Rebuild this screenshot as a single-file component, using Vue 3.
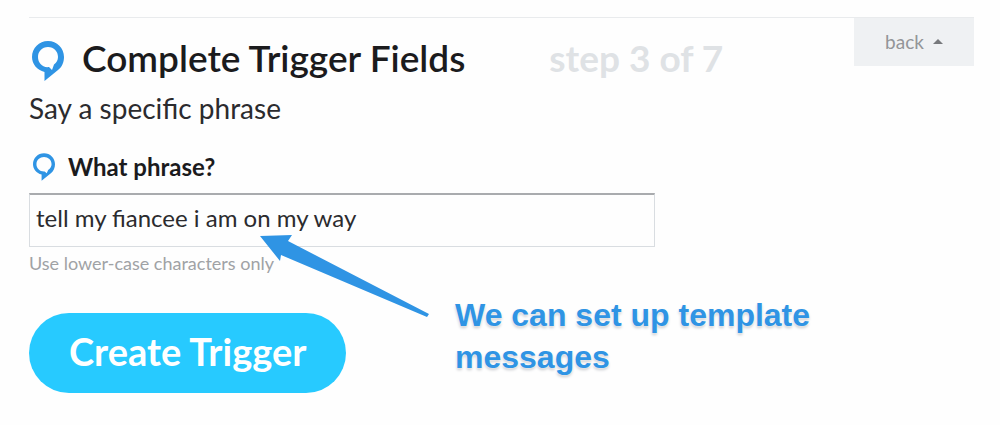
<script setup>
import { ref } from 'vue'

const phrase = ref('tell my fiancee i am on my way')
</script>

<template>
  <main class="page">
    <header class="top">
      <div class="heading">
        <svg class="logo" viewBox="0 0 32 40" aria-hidden="true">
          <path fill-rule="evenodd" d="M16 0C7 0 0 7 0 16C0 23 5 29 12.500 31V40L26 29C30 26 32 21 32 16C32 7 25 0 16 0ZM16 6C22 6 26 10.500 26 16C26 19 24.500 21.500 22 23.500L20 29L17 26C10.500 27 6 22 6 16C6 10.500 10 6 16 6Z" />
        </svg>
        <h1>Complete Trigger Fields</h1>
        <span class="step">step 3 of 7</span>
      </div>
      <button class="back" type="button">
        back
        <svg viewBox="0 0 10 5" aria-hidden="true"><path d="M0 5L5 0L10 5Z" /></svg>
      </button>
    </header>

    <p class="subtitle">Say a specific phrase</p>

    <form class="form" @submit.prevent>
      <label class="label" for="phrase">
        <svg class="logo small" viewBox="0 0 32 40" aria-hidden="true">
          <path fill-rule="evenodd" d="M16 0C7 0 0 7 0 16C0 23 5 29 12.500 31V40L26 29C30 26 32 21 32 16C32 7 25 0 16 0ZM16 5.500C22 5.500 27 10 27 16C27 19 25.500 22 22 24.500L20 29L17 26.500C10 27 5 22 5 16C5 10 10 5.500 16 5.500Z" />
        </svg>
        What phrase?
      </label>
      <input id="phrase" v-model="phrase" type="text" aria-describedby="hint" />
      <p id="hint" class="hint">Use lower-case characters only</p>
      <button class="create" type="submit">Create Trigger</button>
    </form>

    <svg class="arrow" viewBox="0 0 170 82" aria-hidden="true">
      <path d="M0 1L32 0L28 6L169 79L167 82L21 20L20 26Z" />
    </svg>
    <p class="note">We can set up template messages</p>
  </main>
</template>

<style>
body {
  background: #fefefe;
}
</style>

<style scoped>
.page {
  position: relative;
  box-sizing: border-box;
  padding: 17px 26px 32px 29px;
  font-family: Lato, "Liberation Sans", sans-serif;
  color: #1b1b1d;
}

h1,
p {
  margin: 0;
}

.top {
  display: flex;
  justify-content: space-between;
  align-items: flex-start;
  border-top: 1px solid #e9ebed;
}

.heading {
  display: flex;
  align-items: flex-start;
  padding-top: 18px;
}

.logo {
  width: 32px;
  height: 40px;
  margin: 5px 18px 0 3px;
  fill: #2f94e4;
}

.logo.small {
  width: 22px;
  height: 28px;
  margin: 0 13px 0 4px;
}

h1 {
  font-size: 37px;
  line-height: 44px;
  font-weight: 600;
}

.step {
  margin-left: 84px;
  font-size: 37px;
  line-height: 44px;
  font-weight: 700;
  color: #dfe2e5;
}

.back {
  display: flex;
  align-items: center;
  justify-content: center;
  gap: 9px;
  width: 120px;
  height: 48px;
  border: 0;
  padding: 0 0 2px;
  background: #eff1f3;
  font: 19px Lato, sans-serif;
  color: #939598;
}

.back svg {
  width: 10px;
  height: 5px;
  fill: #77797c;
}

.subtitle {
  margin-top: 9px;
  font-size: 28px;
  line-height: 36px;
  font-weight: 400;
  color: #2b2b2e;
}

.form {
  display: flex;
  flex-direction: column;
  align-items: flex-start;
}

.label {
  display: flex;
  align-items: center;
  margin-top: 25px;
  font-size: 24px;
  line-height: 32px;
  font-weight: 700;
}

input {
  box-sizing: border-box;
  width: 66.2%;
  height: 54px;
  margin-top: 10px;
  padding: 0 6px 6px;
  border: 1px solid #d9dde1;
  border-top: 2px solid #a9abae;
  border-radius: 0;
  background: #fefefe;
  font: 24px Lato, sans-serif;
  color: #2b2b2e;
}

.hint {
  margin-top: 4px;
  font-size: 18px;
  line-height: 24px;
  color: #a0a2a5;
}

.create {
  height: 80px;
  margin-top: 38px;
  padding: 0 40px 4px;
  border: 0;
  border-radius: 40px;
  background: #27caff;
  font: 700 38px Lato, sans-serif;
  color: #fff;
}

.arrow {
  position: absolute;
  left: 260px;
  top: 235px;
  width: 170px;
  height: 82px;
  fill: #2f94e4;
}

.note {
  position: absolute;
  left: 455px;
  top: 294px;
  width: 380px;
  font: 700 32px/42px "Liberation Sans", sans-serif;
  color: #2f94e4;
  text-shadow: 0 0 2px #fff, 0 2px 3px #c8cace;
}
</style>
